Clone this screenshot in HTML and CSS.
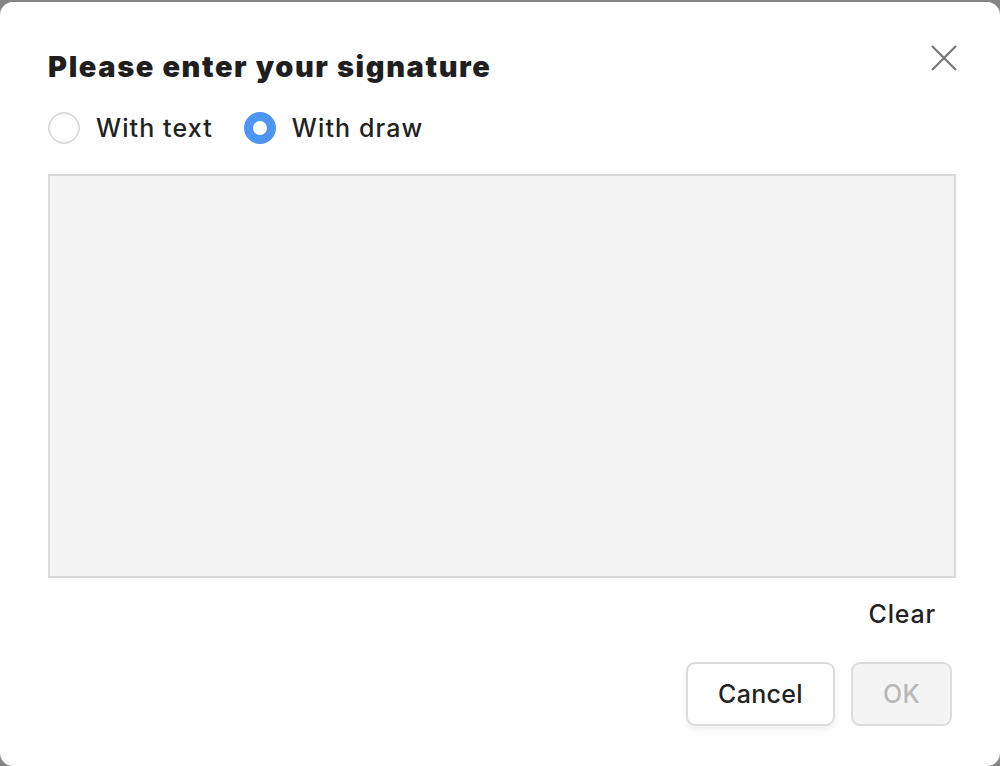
FILE: index.html
```html
<!DOCTYPE html>
<html>
<head>
<meta charset="utf-8">
<link rel="stylesheet" href="styles.css">
</head>
<body>
<div class="modal">
  <div class="header">
    <h1 class="title">Please enter your signature</h1>
    <button class="close" aria-label="Close">
      <svg width="28" height="28" viewBox="0 0 28 28"><path d="M2 2 L26 26 M26 2 L2 26" stroke="#777" stroke-width="2.2" fill="none"/></svg>
    </button>
  </div>
  <div class="radios">
    <label class="radio"><span class="dot"></span><span class="label">With text</span></label>
    <label class="radio checked"><span class="dot"></span><span class="label">With draw</span></label>
  </div>
  <div class="canvas"></div>
  <div class="clear-row"><button class="clear">Clear</button></div>
  <div class="actions">
    <button class="btn cancel">Cancel</button>
    <button class="btn ok" disabled>OK</button>
  </div>
</div>
</body>
</html>
```
FILE: styles.css
```css
html, body {
  margin: 0;
  padding: 0;
}
body {
  background: #858585;
  height: 766px;
  overflow: hidden;
  font-family: "Inter", "Lato", sans-serif;
  color: #222;
}
.modal {
  margin-top: 2px;
  height: 764px;
  box-sizing: border-box;
  background: #fff;
  border-radius: 13px;
  padding: 0 44px 0 48px;
  display: flex;
  flex-direction: column;
}
.header {
  display: flex;
  justify-content: space-between;
  align-items: flex-start;
  height: 94px;
}
.title {
  margin: 46px 0 0 0;
  font-size: 29px;
  font-weight: 900;
  line-height: 38px;
  color: #1f1f1f;
  letter-spacing: 1.6px;
}
.close {
  margin-top: 42px;
  margin-right: -2px;
  border: none;
  background: none;
  padding: 0;
  width: 28px;
  height: 28px;
  cursor: pointer;
}
.close svg { display: block; }
.radios {
  display: flex;
  gap: 31px;
  height: 32px;
  align-items: center;
  margin-top: 16px;
}
.radio {
  display: flex;
  align-items: center;
  gap: 16px;
}
.dot {
  width: 32px;
  height: 32px;
  box-sizing: border-box;
  border-radius: 50%;
  border: 2px solid #dcdcdc;
  background: #fff;
}
.radio.checked .dot {
  border: 9px solid #4f94f7;
}
.label {
  font-size: 25px;
  font-weight: 500;
  color: #222;
  line-height: 32px;
  letter-spacing: 1.1px;
}
.canvas {
  margin-top: 30px;
  width: 908px;
  height: 404px;
  box-sizing: border-box;
  background: #f4f4f4;
  border: 2px solid #dadada;
}
.clear-row {
  display: flex;
  justify-content: flex-end;
  padding-right: 20px;
  margin-top: 21px;
}
.clear {
  border: none;
  background: none;
  padding: 0;
  font-family: inherit;
  font-size: 25px;
  font-weight: 500;
  color: #222;
  line-height: 30px;
  letter-spacing: 0.8px;
}
.actions {
  display: flex;
  justify-content: flex-end;
  gap: 16px;
  margin-top: 33px;
  padding-right: 4px;
}
.btn {
  height: 64px;
  border-radius: 9px;
  border: 2px solid #dcdcdc;
  font-family: inherit;
  font-size: 25px;
  font-weight: 500;
  box-sizing: border-box;
  letter-spacing: 0.3px;
}
.cancel {
  width: 149px;
  background: #fff;
  color: #222;
  box-shadow: 0 4px 6px rgba(0,0,0,0.06);
}
.ok {
  width: 101px;
  background: #f4f4f4;
  color: #b8b8b8;
}
```
